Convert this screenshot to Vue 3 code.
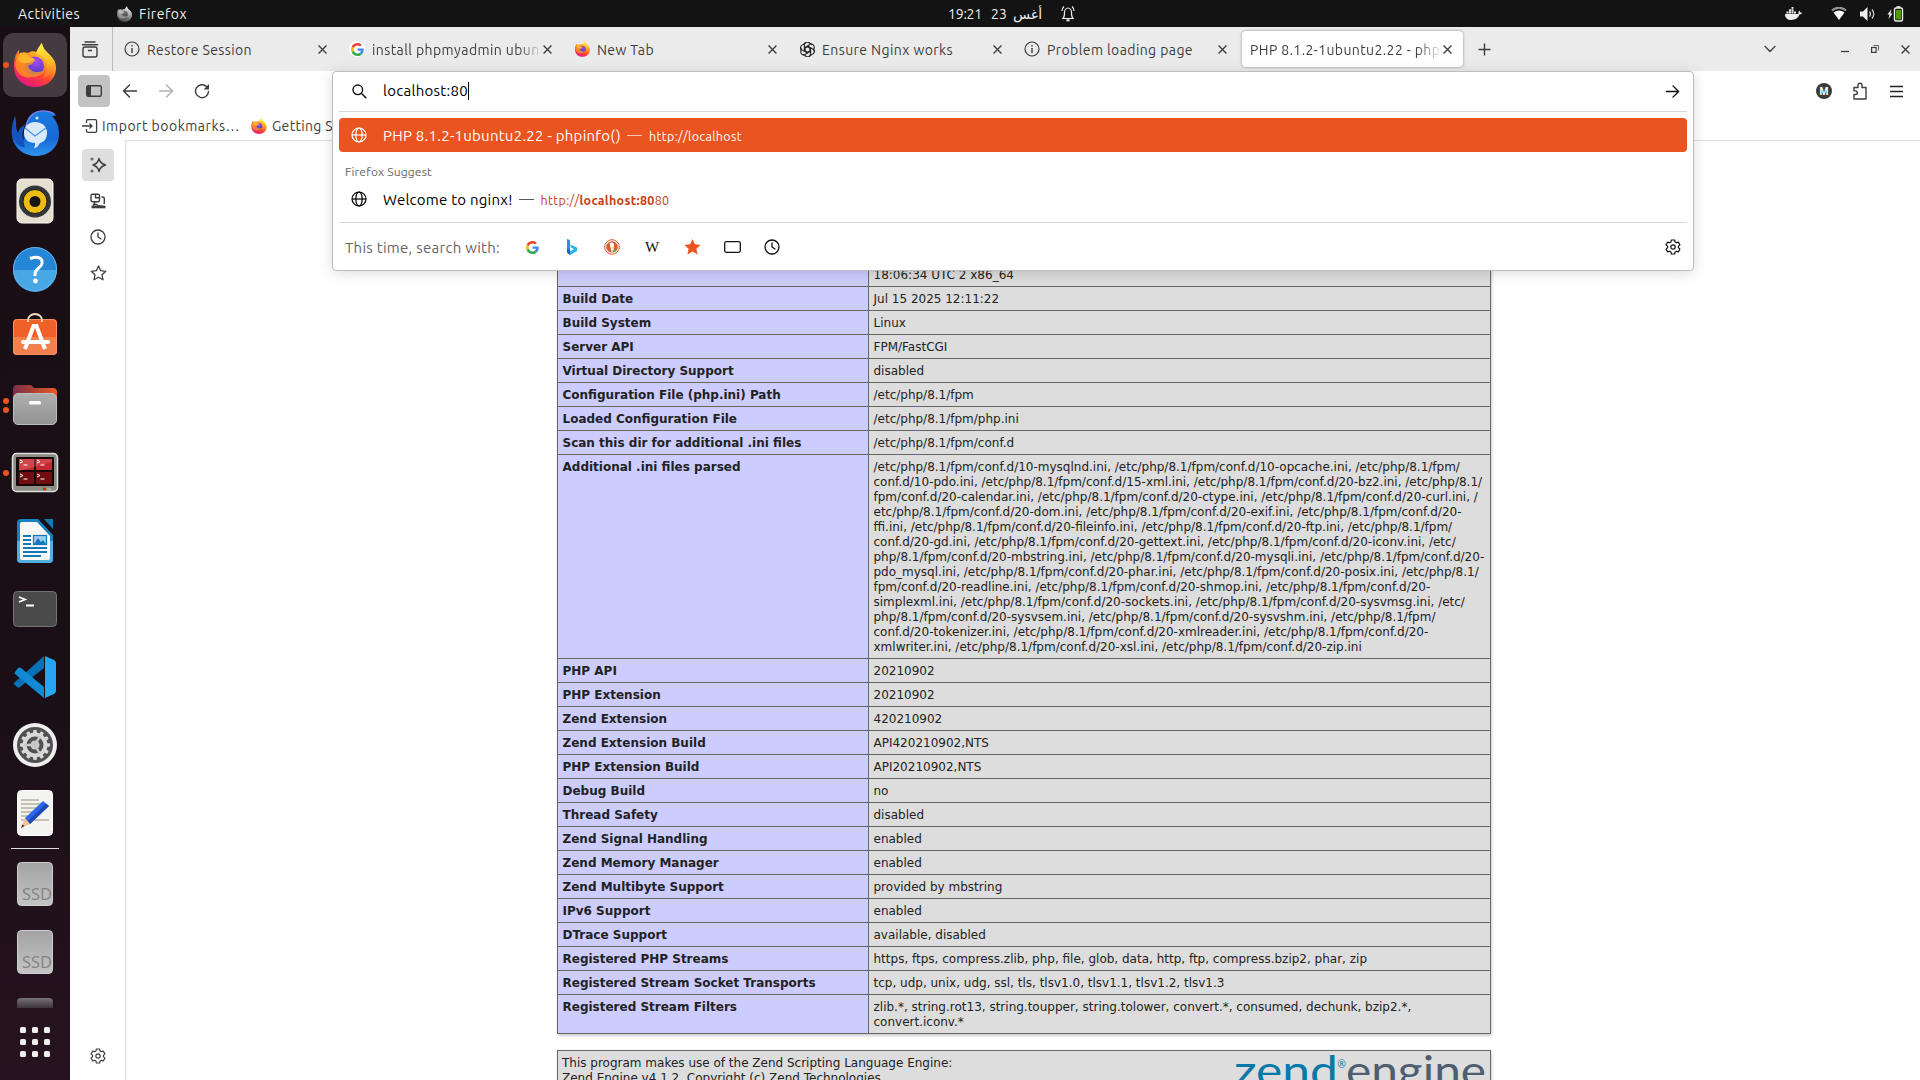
<script setup>
const tabs = [
  { title: 'Restore Session', icon: 'info', width: 105 },
  { title: 'install phpmyadmin ubuntu', icon: 'google', width: 182, fade: true },
  { title: 'New Tab', icon: 'firefox', width: 57 },
  { title: 'Ensure Nginx works', icon: 'openai', width: 131 },
  { title: 'Problem loading page', icon: 'info', width: 146 },
  { title: 'PHP 8.1.2-1ubuntu2.22 - phpinfo()', active: true, width: 227, fade: true },
]

const launchers = [
  { id: 'firefox', dots: 1, current: true },
  { id: 'thunderbird' },
  { id: 'rhythmbox' },
  { id: 'help' },
  { id: 'software' },
  { id: 'files', dots: 2 },
  { id: 'terminator', dots: 1 },
  { id: 'writer' },
  { id: 'terminal' },
  { id: 'vscode' },
  { id: 'settings' },
  { id: 'editor' },
]

const additionalIni = [
  '/etc/php/8.1/fpm/conf.d/10-mysqlnd.ini, /etc/php/8.1/fpm/conf.d/10-opcache.ini, /etc/php/8.1/fpm/',
  'conf.d/10-pdo.ini, /etc/php/8.1/fpm/conf.d/15-xml.ini, /etc/php/8.1/fpm/conf.d/20-bz2.ini, /etc/php/8.1/',
  'fpm/conf.d/20-calendar.ini, /etc/php/8.1/fpm/conf.d/20-ctype.ini, /etc/php/8.1/fpm/conf.d/20-curl.ini, /',
  'etc/php/8.1/fpm/conf.d/20-dom.ini, /etc/php/8.1/fpm/conf.d/20-exif.ini, /etc/php/8.1/fpm/conf.d/20-',
  'ffi.ini, /etc/php/8.1/fpm/conf.d/20-fileinfo.ini, /etc/php/8.1/fpm/conf.d/20-ftp.ini, /etc/php/8.1/fpm/',
  'conf.d/20-gd.ini, /etc/php/8.1/fpm/conf.d/20-gettext.ini, /etc/php/8.1/fpm/conf.d/20-iconv.ini, /etc/',
  'php/8.1/fpm/conf.d/20-mbstring.ini, /etc/php/8.1/fpm/conf.d/20-mysqli.ini, /etc/php/8.1/fpm/conf.d/20-',
  'pdo_mysql.ini, /etc/php/8.1/fpm/conf.d/20-phar.ini, /etc/php/8.1/fpm/conf.d/20-posix.ini, /etc/php/8.1/',
  'fpm/conf.d/20-readline.ini, /etc/php/8.1/fpm/conf.d/20-shmop.ini, /etc/php/8.1/fpm/conf.d/20-',
  'simplexml.ini, /etc/php/8.1/fpm/conf.d/20-sockets.ini, /etc/php/8.1/fpm/conf.d/20-sysvmsg.ini, /etc/',
  'php/8.1/fpm/conf.d/20-sysvsem.ini, /etc/php/8.1/fpm/conf.d/20-sysvshm.ini, /etc/php/8.1/fpm/',
  'conf.d/20-tokenizer.ini, /etc/php/8.1/fpm/conf.d/20-xmlreader.ini, /etc/php/8.1/fpm/conf.d/20-',
  'xmlwriter.ini, /etc/php/8.1/fpm/conf.d/20-xsl.ini, /etc/php/8.1/fpm/conf.d/20-zip.ini',
].join('\n')

const rows = [
  ['Build Date', 'Jul 15 2025 12:11:22'],
  ['Build System', 'Linux'],
  ['Server API', 'FPM/FastCGI'],
  ['Virtual Directory Support', 'disabled'],
  ['Configuration File (php.ini) Path', '/etc/php/8.1/fpm'],
  ['Loaded Configuration File', '/etc/php/8.1/fpm/php.ini'],
  ['Scan this dir for additional .ini files', '/etc/php/8.1/fpm/conf.d'],
  ['Additional .ini files parsed', additionalIni],
  ['PHP API', '20210902'],
  ['PHP Extension', '20210902'],
  ['Zend Extension', '420210902'],
  ['Zend Extension Build', 'API420210902,NTS'],
  ['PHP Extension Build', 'API20210902,NTS'],
  ['Debug Build', 'no'],
  ['Thread Safety', 'disabled'],
  ['Zend Signal Handling', 'enabled'],
  ['Zend Memory Manager', 'enabled'],
  ['Zend Multibyte Support', 'provided by mbstring'],
  ['IPv6 Support', 'enabled'],
  ['DTrace Support', 'available, disabled'],
  ['Registered PHP Streams', 'https, ftps, compress.zlib, php, file, glob, data, http, ftp, compress.bzip2, phar, zip'],
  ['Registered Stream Socket Transports', 'tcp, udp, unix, udg, ssl, tls, tlsv1.0, tlsv1.1, tlsv1.2, tlsv1.3'],
  ['Registered Stream Filters', 'zlib.*, string.rot13, string.toupper, string.tolower, convert.*, consumed, dechunk, bzip2.*,\nconvert.iconv.*'],
]

// Tracks a label so that it fills the given width in px.
const vFit = {
  mounted(el, { value }) {
    const chars = el.textContent.length
    const natural = el.getBoundingClientRect().width
    el.style.letterSpacing = `${(value - natural) / chars}px`
  },
}

const gearTeeth = Array.from({ length: 12 }, (_, i) => i * 30)
const petals = [0, 60, 120, 180, 240, 300]
</script>

<template>
  <div class="desktop">
    <svg class="defs" width="0" height="0">
      <defs>
        <linearGradient id="fxBody" x1=".8" y1=".1" x2=".3" y2="1">
          <stop offset="0" stop-color="#fff44f" /><stop offset=".35" stop-color="#ff9a1f" />
          <stop offset=".65" stop-color="#ff4035" /><stop offset="1" stop-color="#e31587" />
        </linearGradient>
        <linearGradient id="fxFlame" x1=".5" y1="0" x2=".6" y2="1">
          <stop offset="0" stop-color="#fff04a" /><stop offset=".55" stop-color="#ffbd25" /><stop offset="1" stop-color="#ff6a2a" />
        </linearGradient>
        <radialGradient id="fxGlobe" cx=".6" cy=".25" r=".8">
          <stop offset="0" stop-color="#a44cf5" /><stop offset=".6" stop-color="#6b3fd0" /><stop offset="1" stop-color="#4a3bb5" />
        </radialGradient>
        <linearGradient id="tbBody" x1="0" y1="0" x2="0" y2="1">
          <stop offset="0" stop-color="#1b7de0" /><stop offset=".6" stop-color="#1668d6" /><stop offset="1" stop-color="#2f93ec" />
        </linearGradient>
        <linearGradient id="drive" x1="0" y1="0" x2="0" y2="1">
          <stop offset="0" stop-color="#a3a3a3" /><stop offset="1" stop-color="#c4c4c4" />
        </linearGradient>
        <linearGradient id="driveFade" x1="0" y1="0" x2="0" y2="1">
          <stop offset="0" stop-color="#77717a" /><stop offset="1" stop-color="#3d333b" />
        </linearGradient>
        <linearGradient id="folder" x1="0" y1="0" x2="1" y2="0">
          <stop offset="0" stop-color="#77304f" /><stop offset=".5" stop-color="#b2432f" /><stop offset="1" stop-color="#ee5a24" />
        </linearGradient>
        <linearGradient id="folderFront" x1="0" y1="0" x2="0" y2="1">
          <stop offset="0" stop-color="#aeaeae" /><stop offset="1" stop-color="#929292" />
        </linearGradient>
      </defs>
      <symbol id="firefox" viewBox="3 3 42 44">
        <path fill="url(#fxBody)" d="M4 17c1-3 2-5 4-7 0 2 0 3 1 4 3-2 5-2 8-1 3-2 6-2 8-1l6-9c1 5 3 7 7 11 5 5 7 9 7 14 0 11-9 19-21 19S3 38 3 27c0-4 0-7 1-10z" />
        <path fill="url(#fxFlame)" d="M31 2c-1 3-6 7-5 12 7 2 10 7 10 13 0 5-2 9-5 11 9-2 14-10 12-18-1 1-1 2-2 3 0-4-1-7-4-9 0 2 0 2-1 3-3-5-6-7-5-15z" />
        <circle cx="23.500" cy="26" r="9.500" fill="url(#fxGlobe)" />
        <path fill="#ff9a20" d="M5 16c1 3 0 4-1 8 1 10 9 15 17 13 6 0 11-3 12-7-6 4-14 2-16-4 3-1 6-3 7-6-4 0-5-2-8-4-3-1-7-3-11 0z" opacity=".75" />
        <path fill="#ffb52b" d="M9 13c4-1 7 1 9 4 3 0 5 1 6 3-3 1-4 3-8 3-4 1-8-1-9-4z" />
      </symbol>
      <symbol id="globe" viewBox="0 0 16 16">
        <g fill="none" stroke="currentColor" stroke-width="1.200">
          <circle cx="8" cy="8" r="7" /><ellipse cx="8" cy="8" rx="3.200" ry="7" /><path d="M1 8h14" />
        </g>
      </symbol>
      <symbol id="close" viewBox="0 0 8 8"><path d="M.5.5l7 7M7.500.5l-7 7" fill="none" stroke="currentColor" stroke-width="1.200" /></symbol>
      <symbol id="google" viewBox="0 0 48 48">
        <path fill="#EA4335" d="M24 9.500c3.540 0 6.710 1.220 9.210 3.600l6.850-6.850C35.900 2.380 30.470 0 24 0 14.620 0 6.510 5.380 2.560 13.220l7.980 6.190C12.430 13.720 17.740 9.500 24 9.500z" />
        <path fill="#4285F4" d="M46.980 24.550c0-1.570-.15-3.090-.38-4.550H24v9.020h12.940c-.58 2.960-2.260 5.480-4.780 7.180l7.730 6c4.510-4.180 7.090-10.360 7.090-17.650z" />
        <path fill="#FBBC05" d="M10.530 28.590c-.48-1.450-.76-2.990-.76-4.590s.27-3.140.76-4.590l-7.980-6.190C.92 16.460 0 20.120 0 24s.92 7.540 2.560 10.780l7.970-6.190z" />
        <path fill="#34A853" d="M24 48c6.480 0 11.930-2.130 15.890-5.810l-7.730-6c-2.150 1.450-4.920 2.300-8.160 2.300-6.260 0-11.570-4.220-13.470-9.910l-7.980 6.190C6.510 42.620 14.620 48 24 48z" />
      </symbol>
      <symbol id="clock" viewBox="0 0 16 16">
        <g fill="none" stroke="currentColor" stroke-width="1.300" stroke-linecap="round"><circle cx="8" cy="8" r="7" /><path d="M8 4v4l3 2" /></g>
      </symbol>
      <symbol id="gear" viewBox="0 0 16 16">
        <g fill="none" stroke="currentColor" stroke-width="1.200" stroke-linejoin="round">
          <path d="M6.400 1h3.200l.5 2 1.200.7 2-.6 1.600 2.700-1.500 1.500v1.400l1.500 1.500-1.600 2.700-2-.6-1.200.7-.5 2H6.400l-.5-2-1.200-.7-2 .6-1.600-2.700 1.500-1.500V7.300L1.100 5.800l1.600-2.700 2 .6 1.200-.7z" />
          <circle cx="8" cy="8" r="2.200" />
        </g>
      </symbol>
      <symbol id="arrow" viewBox="0 0 16 16">
        <path d="M1.500 8h13M8.500 2l6 6-6 6" fill="none" stroke="currentColor" stroke-width="1.500" stroke-linecap="round" stroke-linejoin="round" />
      </symbol>
    </svg>

    <header class="topbar">
      <div class="top-left">
        <span class="activities"><span v-fit="62">Activities</span></span>
        <svg class="mono" width="15" height="16"><use href="#firefox" /></svg>
        <span v-fit="48">Firefox</span>
      </div>
      <div class="top-center">
        <span v-fit="34">19:21</span>
        <span v-fit="16" class="day">23</span>
        <span class="month" lang="ar">أغس</span>
        <svg width="14" height="17" viewBox="0 0 14 17" fill="none" stroke="#eee" stroke-width="1.200">
          <path d="M2 13.500c1.500-1.500 1.500-3 1.500-6a3.500 4.500 0 017 0c0 3 0 4.500 1.500 6zM1 6c0-2 .8-3.500 2-4.500M13 6c0-2-.8-3.500-2-4.500" /><path d="M5.500 15.300h3" stroke-width="2" />
        </svg>
      </div>
      <div class="top-right">
        <svg class="docker" width="17" height="13" viewBox="0 0 17 13" fill="#eee"><path d="M0 7h12.500c1 0 1.500-1 1-2.500l.7-.8c1 .7 1 1.500 1 2 .7-.2 1.300 0 1.800.2-.4 1-1.300 1.400-2.400 1.400C13.300 11 10.500 13 6.500 13 2.500 13 0 11 0 7zM1.500 4.500h2v2h-2zM4 4.500h2v2H4zM6.500 4.500h2v2h-2zM9 4.500h2v2H9zM4 2.200h2v2H4zM6.500 2.200h2v2h-2zM6.500 0h2v1.800h-2z" /></svg>
        <svg class="wifi" width="16" height="14" viewBox="0 0 16 14"><path d="M1 3.500c4-3.700 10-3.700 14 0" fill="none" stroke="#999" stroke-width="2" /><path d="M2.500 5.500C6 2.800 10 2.800 13.500 5.500L8 13z" fill="#fff" /></svg>
        <svg class="volume" width="16" height="14" viewBox="0 0 16 14"><path d="M0 4.500h3L7.500 0v14L3 9.500H0z" fill="#eee" /><path d="M9.500 4.500q2 2.500 0 5M12 2.500q3.500 4.500 0 9" fill="none" stroke="#ccc" stroke-width="1.300" /></svg>
        <svg width="17" height="16" viewBox="0 0 17 16"><path d="M4.500 3L.5 8.500h2L1.500 13l4-5.500h-2z" fill="#eee" /><rect x="7.500" y="2" width="8" height="13" rx="1.500" fill="none" stroke="#eee" stroke-width="1.400" /><path d="M9.500 1h4" stroke="#eee" stroke-width="1.600" /><rect x="9" y="4" width="5" height="9.500" fill="#4e9a06" /></svg>
      </div>
    </header>

    <div class="workspace">
      <nav class="dock">
        <div v-for="app in launchers" :key="app.id" class="slot" :class="{ current: app.current }">
          <span v-if="app.dots" class="running"><i v-for="n in app.dots" :key="n" /></span>
          <svg v-if="app.id === 'firefox'" width="42" height="44"><use href="#firefox" /></svg>
          <svg v-else width="48" height="48" viewBox="0 0 48 48">
            <g v-if="app.id === 'thunderbird'">
              <path fill="#1355bd" d="M4 7C0 17-1 28 4 36c5 8 13 11 21 10L12 30c-2-6 1-10 2-14-5 2-6 5-7 8C4 18 6 12 4 7z" />
              <path fill="url(#tbBody)" d="M14 18C16 8 21 2 31 1.500c6-.5 12 1 14 5l-4 .5c6 6 7 13 7 18C48 38 38 47 25 47 13 47 4 39 2 29c4 7 8 10 12 9-2-8-2-14 0-20z" />
              <path fill="none" stroke="#9a7be8" stroke-width="1.200" d="M15 17C18 7 23 2 31 2c5 0 9 0 12 3" />
              <path fill="#d8eafc" d="M24 13c8 0 12 5 12 11s-3 9-7 10c-2 3-3 5-6 5 1-2 1-3 1-5-7 0-11-4-11-10s4-11 11-11z" />
              <path fill="none" stroke="#4c8fe0" stroke-width="1.200" d="M14 19l10 8 11-8" />
              <circle cx="26" cy="9" r="1.500" fill="#dceaff" />
            </g>
            <g v-else-if="app.id === 'rhythmbox'">
              <rect x="6" y="2" width="36" height="44" rx="5" fill="#e4dfd1" stroke="#faf8f0" />
              <circle cx="24" cy="24.500" r="16" fill="#333639" /><circle cx="24" cy="24.500" r="12" fill="#eebd15" stroke="#14171b" /><circle cx="24" cy="24.500" r="5.500" fill="#151515" />
            </g>
            <g v-else-if="app.id === 'help'">
              <circle cx="24" cy="24" r="22" fill="#2586d5" /><path d="M2 25a22 22 0 0044 0z" fill="#48a7e5" /><circle cx="24" cy="24" r="21.500" fill="none" stroke="#5fb2ea" />
              <path d="M19 13.500c8-3 13-.5 12 5-.8 4.500-7 5-7 10.500v2" fill="none" stroke="#fff" stroke-width="3" /><circle cx="24.500" cy="36" r="2.400" fill="#fff" />
            </g>
            <g v-else-if="app.id === 'software'">
              <rect x="2" y="6" width="44" height="36" rx="4" fill="#f06129" /><path d="M2 24h44v14a4 4 0 01-4 4H6a4 4 0 01-4-4z" fill="#f37f4d" /><rect x="2.500" y="6.500" width="43" height="35" rx="4" fill="none" stroke="#f49065" />
              <path d="M17 9V7a7 6 0 0114 0v2" fill="none" stroke="#f1dfb5" stroke-width="1.800" />
              <path d="M14 36l8.500-23h3L34 36" fill="none" stroke="#fff" stroke-width="4" /><path d="M12 29h25" stroke="#fff" stroke-width="4" stroke-linecap="round" />
            </g>
            <g v-else-if="app.id === 'files'">
              <path d="M2 8a4 4 0 014-4h14l3 3h19a4 4 0 014 4v10H2z" fill="url(#folder)" />
              <rect x="2.500" y="12.500" width="43" height="31" rx="4.500" fill="url(#folderFront)" stroke="#bcbcbc" /><rect x="18" y="20" width="12" height="3.500" rx="1.500" fill="#fff" />
            </g>
            <g v-else-if="app.id === 'terminator'">
              <rect x="1.500" y="4.500" width="45" height="38" rx="4" fill="#8b8d85" stroke="#e0e1dc" stroke-width="1.500" /><rect x="5" y="8" width="38" height="29" rx="1" fill="#180707" />
              <path fill="#c22a31" d="M8 10h15v11H8zM25 10h16v11H25z" /><path fill="#720d12" d="M8 23h15v12H8zM25 23h16v12H25z" /><path fill="#e96b6d" opacity=".4" d="M8 10h33v3L8 22z" />
              <path fill="none" stroke="#fff" d="M9 11l3 1.500L9 14M12.500 16h4M26 11l3 1.500-3 1.500M29.500 16h4M9 25l3 1.500L9 28M12.500 30h4M26 25l3 1.500-3 1.500M29.500 30h4" />
              <path d="M32 40h3" stroke="#e21" stroke-width="2.500" /><path d="M36 40h4" stroke="#aaa" stroke-width="2" />
            </g>
            <g v-else-if="app.id === 'writer'">
              <path d="M10 2h17l15 16v24a4 4 0 01-4 4H10a4 4 0 01-4-4V6a4 4 0 014-4z" fill="#1583bf" /><path d="M6 24h36v18a4 4 0 01-4 4H10a4 4 0 01-4-4z" fill="#50afdf" />
              <path d="M11 5h15l13 14v22a2 2 0 01-2 2H11a2 2 0 01-2-2V7a2 2 0 012-2z" fill="#f8f8f8" /><path d="M33 2h9v10z" fill="#1477b0" />
              <path d="M12 19h8M12 23h8M12 27h8M12 31h24M12 35h24M12 39h18" stroke="#1278b8" stroke-width="2" /><rect x="22.500" y="18.500" width="13" height="9" fill="#9bcdec" stroke="#1278b8" stroke-width="1.200" /><path d="M23 27l4-6 3 4 2-2 3 4z" fill="#1278b8" />
            </g>
            <g v-else-if="app.id === 'terminal'">
              <rect x="2.500" y="6.500" width="43" height="35" rx="4" fill="#4a4a4a" stroke="#747474" /><path d="M8 12l6 2.500L8 17M15 20.500h8" fill="none" stroke="#fff" stroke-width="1.800" />
            </g>
            <g v-else-if="app.id === 'vscode'">
              <path d="M4 29l29-26v12L9 34q-2 1-3 0l-3-3q-1-1 1-2z" fill="#0870b5" /><path d="M4 19l3-4q1-1 3 0l23 19v11L4 21q-1-1 0-2z" fill="#1189d5" /><path d="M34 3l9 4q2 1 2 3v28q0 2-2 3l-9 4z" fill="#27a5f2" />
            </g>
            <g v-else-if="app.id === 'settings'">
              <circle cx="24" cy="24" r="22" fill="#eee" /><circle cx="24" cy="24" r="18" fill="#515151" />
              <rect v-for="a in gearTeeth" :key="a" x="22.200" y="9" width="3.600" height="6" rx="1" fill="#d8d8d8" :transform="`rotate(${a} 24 24)`" />
              <circle cx="24" cy="24" r="10.500" fill="none" stroke="#d8d8d8" stroke-width="4" /><circle cx="24" cy="24" r="4.500" fill="#ccc" /><path d="M24 24H13M24 24l5-9M24 24l5 9" stroke="#c8c8c8" stroke-width="2.500" />
            </g>
            <g v-else>
              <rect x="6.500" y="1.500" width="35" height="45" rx="4" fill="#f3f3f2" stroke="#fff" /><path d="M10 11h18M10 15h22M10 19h20M10 23h14M10 27h12M10 31h28" stroke="#c5c1b3" stroke-width="1.800" />
              <path d="M10 39l4-10 5 6z" fill="#fbc28a" /><path d="M10 39l1.500-3.500 2 1.500z" fill="#333" /><path d="M14 29l18-17 6 5-19 18z" fill="#2f66e8" /><path d="M17 32l18-17.500 3 2.500-19 18z" fill="#1d49b8" />
            </g>
          </svg>
        </div>
        <div class="dock-rule" />
        <div v-for="n in 2" :key="n" class="slot">
          <svg width="48" height="48" viewBox="0 0 48 48">
            <rect x="6.500" y="2.500" width="35" height="43" rx="4" fill="url(#drive)" stroke="#cfcfcf" />
            <text x="11" y="40" class="ssd" textLength="30" lengthAdjust="spacingAndGlyphs">SSD</text>
          </svg>
        </div>
        <div class="slot partial"><svg width="48" height="22" viewBox="0 0 48 22"><path d="M6 22V16q0-4 4-4h28q4 0 4 4v6z" fill="url(#driveFade)" /></svg></div>
        <div class="apps"><i v-for="n in 9" :key="n" /></div>
      </nav>

      <main class="browser">
        <div class="tabstrip">
          <div class="recent">
            <svg width="18" height="17" viewBox="0 0 18 17" fill="none" stroke="currentColor" stroke-width="1.400" stroke-linecap="round"><path d="M4 1h10M1.500 3.800h15" /><rect x="2" y="6" width="14" height="10" rx="2" /><path d="M7.500 9.500h3" /></svg>
          </div>
          <div v-for="tab in tabs" :key="tab.title" class="tab" :class="{ active: tab.active }">
            <span v-if="tab.icon" class="favicon" :class="{ disc: tab.icon === 'google' }">
              <svg v-if="tab.icon === 'info'" width="16" height="16" viewBox="0 0 16 16"><circle cx="8" cy="8" r="7" fill="none" stroke="currentColor" stroke-width="1.200" /><path d="M8 7v5M8 4v1.500" stroke="currentColor" stroke-width="1.400" /></svg>
              <svg v-else-if="tab.icon === 'google'" width="13" height="13"><use href="#google" /></svg>
              <svg v-else-if="tab.icon === 'firefox'" width="15" height="16"><use href="#firefox" /></svg>
              <svg v-else width="15" height="15" viewBox="-8 -8 16 16" fill="none" stroke="#222" stroke-width="1.200">
                <path v-for="a in petals" :key="a" d="M-3.500-4.500v-.5a3.300 3.300 0 015.800-1.700L5-5M-3.300-4.500V1L0 3" :transform="`rotate(${a})`" />
              </svg>
            </span>
            <span class="tab-title" :class="{ fade: tab.fade }"><span v-fit="tab.width">{{ tab.title }}</span></span>
            <svg class="tab-close" width="9" height="9"><use href="#close" /></svg>
          </div>
          <svg class="new-tab" width="13" height="13" viewBox="0 0 13 13"><path d="M6.500.5v12M.5 6.500h12" stroke="currentColor" stroke-width="1.400" /></svg>
          <div class="window-controls">
            <svg width="12" height="8" viewBox="0 0 12 8"><path d="M.7 1L6 6.500 11.300 1" fill="none" stroke="currentColor" stroke-width="1.300" /></svg>
            <svg class="minimize" width="8" height="8" viewBox="0 0 8 8"><path d="M0 6.500h8" stroke="currentColor" stroke-width="1.300" /></svg>
            <svg class="restore" width="8" height="8" viewBox="0 0 8 8" fill="none" stroke="currentColor"><rect x=".6" y="2.500" width="4.500" height="4.900" stroke-width="1.200" /><path d="M2.500.5h5v5" stroke-width=".8" /></svg>
            <svg class="quit" width="9" height="9"><use href="#close" /></svg>
          </div>
        </div>

        <div class="toolbar">
          <span class="tool on"><svg width="16" height="12" viewBox="0 0 16 12"><rect x=".7" y=".7" width="14.600" height="10.600" rx="1.500" fill="none" stroke="currentColor" stroke-width="1.400" /><path d="M1 1h4v10H1z" fill="currentColor" /></svg></span>
          <span class="tool"><svg class="back" width="16" height="16"><use href="#arrow" /></svg></span>
          <span class="tool dim"><svg width="16" height="16"><use href="#arrow" /></svg></span>
          <span class="tool"><svg width="16" height="16" viewBox="0 0 16 16"><path d="M14.500 8.500A6.500 6.500 0 1112.500 3.500l1.500 1.700" fill="none" stroke="currentColor" stroke-width="1.400" stroke-linecap="round" /><path d="M15 1v5.500H9.500z" fill="currentColor" /></svg></span>
          <div class="right-tools">
            <span class="avatar">M</span>
            <svg width="16" height="18" viewBox="0 0 16 18"><path d="M2 17V12.500h1.500a1.800 1.800 0 000-3.600H2V5.500h4V3.200a2 2 0 014 0v2.300h4V17z" fill="none" stroke="currentColor" stroke-width="1.400" stroke-linejoin="round" /></svg>
            <svg width="13" height="13" viewBox="0 0 13 13"><path d="M0 1.500h13M0 6.500h13M0 11.500h13" stroke="#222" stroke-width="1.300" /></svg>
          </div>
        </div>

        <div class="bookmarks">
          <svg width="16" height="14" viewBox="0 0 16 14" fill="none" stroke="currentColor" stroke-width="1.300"><path d="M4.500 4V2q0-1.300 1.300-1.300h7.500q1.300 0 1.300 1.300v10q0 1.300-1.300 1.300H5.800q-1.300 0-1.300-1.300v-2M0 7h10M7.500 4.500L10 7 7.500 9.500" /></svg>
          <span class="import"><span v-fit="138">Import bookmarks…</span></span>
          <svg width="16" height="16"><use href="#firefox" /></svg>
          <span class="getting"><span v-fit="102">Getting Started</span></span>
        </div>

        <div class="content">
          <aside class="sidebar">
            <span class="side on"><svg width="18" height="18" viewBox="0 0 18 18"><path d="M10 2.500q1 5 6.500 6.500Q11 10.500 10 15.500 9 10.500 4 9q5-1.500 6-6.500z" fill="none" stroke="currentColor" stroke-width="1.400" stroke-linejoin="round" /><circle cx="3" cy="3" r="1.500" fill="currentColor" opacity=".75" /><circle cx="3" cy="15" r="1.500" fill="currentColor" opacity=".75" /></svg></span>
            <span class="side"><svg width="16" height="16" viewBox="0 0 16 16" fill="none" stroke="currentColor" stroke-width="1.400"><rect x="1" y="1.200" width="8.500" height="7.500" rx="1.500" /><path d="M5.500 1.500V4.800H9.500M11.500 4h1.300q1.500 0 1.500 1.500V11M4.500 9v2.500" /><path d="M1.500 14h14" stroke-width="2.600" /><path d="M3.500 13.500V11.500h3l2 1.500h4" /></svg></span>
            <span class="side"><svg width="16" height="16"><use href="#clock" /></svg></span>
            <span class="side"><svg width="17" height="16" viewBox="0 0 17 16"><path d="M8.500 1l2.200 4.700 5.100.6-3.800 3.500 1 5-4.500-2.500-4.500 2.500 1-5L1.200 6.300l5.100-.6z" fill="none" stroke="currentColor" stroke-width="1.300" stroke-linejoin="round" /></svg></span>
            <span class="side customize"><svg width="16" height="16"><use href="#gear" /></svg></span>
          </aside>
          <section class="page">
            <table class="phpinfo">
              <tbody>
                <tr class="system"><th></th><td>18:06:34 UTC 2 x86_64</td></tr>
                <tr v-for="row in rows" :key="row[0]"><th>{{ row[0] }}</th><td>{{ row[1] }}</td></tr>
              </tbody>
            </table>
            <div class="engine">
              <p>This program makes use of the Zend Scripting Language Engine:<br />Zend Engine v4.1.2, Copyright (c) Zend Technologies</p>
              <svg width="252" height="40" viewBox="0 0 252 40">
                <text x="0" y="35" class="zend" textLength="104" lengthAdjust="spacingAndGlyphs">zend</text>
                <text x="103.500" y="17" class="reg">®</text>
                <text x="112" y="35" class="zengine" textLength="140" lengthAdjust="spacingAndGlyphs">engine</text>
              </svg>
            </div>
          </section>
        </div>

        <div class="urlbar">
          <div class="input-row">
            <svg width="15" height="15" viewBox="0 0 15 15"><circle cx="5.800" cy="5.800" r="4.800" fill="none" stroke="currentColor" stroke-width="1.400" /><path d="M9.300 9.300l5 5" stroke="currentColor" stroke-width="1.500" /></svg>
            <span class="typed"><span v-fit="85">localhost:80</span></span>
            <svg class="go" width="15" height="15"><use href="#arrow" /></svg>
          </div>
          <div class="results">
            <div class="result selected">
              <svg width="16" height="16"><use href="#globe" /></svg>
              <span class="title"><span v-fit="238">PHP 8.1.2-1ubuntu2.22 - phpinfo()</span></span><i class="dash" /><span v-fit="93" class="url">http://localhost</span>
            </div>
            <div class="group"><span v-fit="87">Firefox Suggest</span></div>
            <div class="result">
              <svg width="16" height="16"><use href="#globe" /></svg>
              <span class="title"><span v-fit="129.500">Welcome to nginx!</span></span><i class="dash" /><span v-fit="129" class="url">http://<b>localhost:80</b>80</span>
            </div>
          </div>
          <div class="oneoffs">
            <span class="hint"><span v-fit="155">This time, search with:</span></span>
            <span class="engine-icon"><svg width="13" height="13"><use href="#google" /></svg></span>
            <span class="engine-icon"><svg width="12" height="16" viewBox="0 0 12 16"><path d="M1 0l3 1v10.500L1 13.500z" fill="#2b8cf5" /><path d="M1 13.500l3-1 4-2.500-3-1.500L4 5.500l7 3v3.500L4 16z" fill="#23b4ee" /><path d="M1 9.500v4L4 16V11z" fill="#155fe0" /></svg></span>
            <span class="engine-icon"><svg width="16" height="16" viewBox="0 0 16 16"><circle cx="8" cy="8" r="7.300" fill="#fff" stroke="#de5833" stroke-width="1" /><circle cx="8" cy="8" r="5.800" fill="#de5833" /><path d="M5.500 4q3-1.500 4.500 1v3.500L9 13.500 7.500 13z" fill="#fff" /><path d="M8 8l3 .3L8.500 9.500z" fill="#fdc52c" /><path d="M8.500 11h3v2h-3z" fill="#4cba3c" /></svg></span>
            <span class="engine-icon wiki">W</span>
            <span class="engine-icon"><svg width="17" height="16" viewBox="0 0 17 16"><path d="M8.500 0l2.400 5.300 5.800.6-4.300 3.900 1.200 5.800-5.100-3-5.100 3 1.200-5.800L.3 5.900l5.800-.6z" fill="#e95420" /></svg></span>
            <span class="engine-icon"><svg width="17" height="12" viewBox="0 0 17 12"><rect x=".7" y=".7" width="15.600" height="10.600" rx="1.500" fill="none" stroke="currentColor" stroke-width="1.300" /></svg></span>
            <span class="engine-icon"><svg width="16" height="16"><use href="#clock" /></svg></span>
            <svg class="search-settings" width="16" height="16"><use href="#gear" /></svg>
          </div>
        </div>
      </main>
    </div>
  </div>
</template>

<style>
html, body { margin: 0; overflow: hidden; }
</style>

<style scoped>
* { box-sizing: border-box; }
svg { display: block; flex: none; }
.defs { position: absolute; }
.desktop { width: 1920px; height: 1080px; overflow: hidden; display: flex; flex-direction: column; font-family: Ubuntu, "Noto Sans", "DejaVu Sans", sans-serif; font-size: 14px; color: #3d3d3d; white-space: nowrap; }
.topbar { height: 27px; flex: none; background: #131313; color: #eee; display: grid; grid-template-columns: 948px 1fr auto; align-items: center; }
.top-left, .top-center, .top-right { display: flex; align-items: center; }
.top-left { padding-left: 18px; }
.activities { width: 99px; }
.mono { filter: grayscale(1); margin-right: 7px; }
.day { margin-left: 9px; }
.month { width: 31px; margin-left: 5px; font: 14px "DejaVu Sans", sans-serif; text-align: center; }
.top-center svg { margin-left: 18px; }
.top-right { padding-right: 16px; }
.wifi { margin-left: 29px; }
.volume { margin: 0 11px 0 13px; }

.workspace { flex: 1; min-height: 0; display: flex; }
.dock { width: 70px; flex: none; padding-top: 4px; background: linear-gradient(175deg, #1a0e15 0%, #1b0f17 65%, #26131f 100%); display: flex; flex-direction: column; align-items: center; }
.slot { position: relative; width: 64px; height: 64px; margin: 2px 0; flex: none; border-radius: 10px; display: flex; align-items: center; justify-content: center; }
.current { background: #443a40; }
.running { position: absolute; left: 0; top: 0; height: 64px; width: 6px; display: flex; flex-direction: column; justify-content: center; gap: 3px; }
.running i { width: 6px; height: 6px; border-radius: 3px; background: #e95420; }
.dock-rule { width: 48px; height: 1px; margin: 1px 0; background: #ddd; flex: none; }
.ssd { font: 17px "Noto Sans", sans-serif; fill: #858585; }
.partial { height: 22px; margin: 0; align-items: flex-end; }
.apps { margin-top: 19px; display: grid; grid-template-columns: repeat(3, 6px); gap: 6px; }
.apps i { height: 6px; border-radius: 1.500px; background: #f0efee; }

.browser { position: relative; flex: 1; min-width: 0; background: #fff; display: flex; flex-direction: column; }
.tabstrip { height: 44px; flex: none; background: #ebebeb; display: flex; align-items: center; }
.recent { width: 43px; height: 44px; border-right: 1px solid #bcbcbc; margin-right: 4px; padding-left: 11px; display: flex; align-items: center; }
.tab { width: 221px; height: 36px; margin-right: 4px; padding: 0 11px 0 7px; border-radius: 4px; display: flex; align-items: center; }
.active { background: #fff; box-shadow: 0 0 3px rgba(0, 0, 0, .4); padding-left: 8px; }
.favicon { width: 16px; height: 16px; margin-right: 7px; flex: none; border-radius: 8px; display: flex; align-items: center; justify-content: center; }
.disc { background: #fff; }
.tab-title { flex: 1; overflow: hidden; margin-right: 4px; padding-top: 2px; }
.fade { mask-image: linear-gradient(90deg, #000 88%, transparent 102%); }
.new-tab { margin-left: 11px; }
.window-controls { margin-left: auto; padding-right: 10px; display: flex; align-items: center; }
.minimize { margin-left: 65px; }
.restore { margin-left: 22px; }
.quit { margin-left: 22px; }

.toolbar { height: 40px; flex: none; padding-left: 8px; display: flex; align-items: center; }
.tool { width: 32px; height: 32px; margin-right: 4px; border-radius: 4px; display: flex; align-items: center; justify-content: center; }
.tool.on { background: #c3c3c3; }
.dim { opacity: .4; }
.back { transform: scaleX(-1); }
.right-tools { margin-left: auto; padding-right: 17px; display: flex; align-items: center; gap: 22px; }
.avatar { width: 16px; height: 16px; margin-right: -2px; border-radius: 8px; background: #3b3b3b; color: #fff; font: bold 10px/16px "Noto Sans", sans-serif; text-align: center; }
.bookmarks { height: 29px; flex: none; padding-left: 12px; display: flex; align-items: center; }
.import { width: 140px; margin: 0 9px 0 4px; }
.getting { margin-left: 5px; }

.content { flex: 1; min-height: 0; display: flex; }
.sidebar { width: 55px; padding: 9px 0 8px 12px; display: flex; flex-direction: column; gap: 4px; }
.side { width: 32px; height: 32px; border-radius: 4px; display: flex; align-items: center; justify-content: center; }
.side.on { background: #dedede; }
.customize { margin-top: auto; }
.page { flex: 1; overflow: hidden; border: 1px solid #e0e0e0; border-width: 1px 0 0 1px; box-shadow: inset 2px 0 2px -2px #ddd; padding: 106px 0 0 431px; font: 12px/15px "DejaVu Sans", sans-serif; color: #222; }
.phpinfo { width: 934px; table-layout: fixed; border-collapse: collapse; box-shadow: 1px 2px 3px #ccc; }
.phpinfo th, .phpinfo td { border: 1px solid #666; padding: 5px 4px 3px 4.500px; text-align: left; vertical-align: top; white-space: pre; }
.phpinfo th { width: 311px; background: #ccf; font-weight: bold; }
.phpinfo td { background: #ddd; }
.phpinfo .system td { height: 39px; vertical-align: bottom; }
.engine { width: 934px; height: 60px; margin-top: 16px; padding: 5px 4px 4px; border: 1px solid #666; background: #ddd; box-shadow: 1px 2px 3px #ccc; display: flex; justify-content: space-between; }
.engine p { margin: 0; }
.engine svg { margin-top: -5px; }
.zend, .zengine { font: 42px Lato, sans-serif; fill: #0679a8; }
.zengine { fill: #4e5d70; }
.reg { font: 10px "Noto Sans", sans-serif; fill: #0679a8; }

.urlbar { position: absolute; left: 262px; top: 44px; width: 1362px; height: 200px; padding: 0 6px; background: #fff; border: 1px solid #bdbdbd; border-radius: 4px; box-shadow: 0 2px 14px rgba(0, 0, 0, .14); color: #111; }
.input-row { height: 40px; padding: 0 7px 1px 13px; border-bottom: 1px solid #d8d8d8; display: flex; align-items: center; }
.typed { margin: 0 0 0 16px; width: 86px; border-right: 1px solid #000; font-size: 15px; line-height: 18px; color: #000; }
.go { margin-left: auto; }
.results { height: 111px; padding-top: 6px; border-bottom: 1px solid #d8d8d8; }
.result { height: 34px; padding-left: 12px; border-radius: 4px; display: flex; align-items: center; font-size: 15px; color: #000; }
.title { margin-left: 16px; }
.result.selected { background: #e95420; color: #fff; }
.dash { width: 15px; height: 1px; margin: 0 7px 0 6px; background: currentColor; opacity: .65; }
.url { font-size: 12.500px; color: #c63d13; padding-top: 1px; }
.selected .url { color: #fff; }
.group { height: 30px; padding: 12px 0 0 6px; font-size: 12px; line-height: 16px; color: #666; }
.oneoffs { height: 47px; padding: 1px 6px 0; display: flex; align-items: center; }
.hint { width: 167px; color: #666; font-size: 15px; }
.engine-icon { width: 40px; display: flex; justify-content: center; }
.wiki { font: 15px/16px "Liberation Serif", serif; }
.search-settings { margin-left: auto; }
</style>
